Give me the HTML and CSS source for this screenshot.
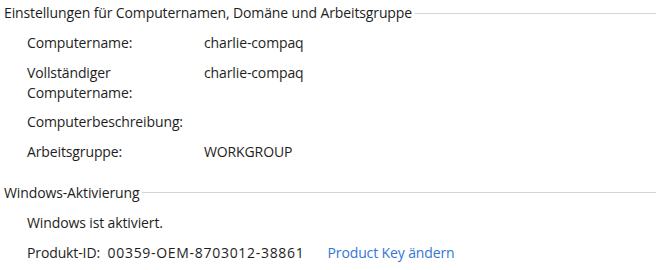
FILE: index.html
```html
<!DOCTYPE html>
<html lang="de">
  <head>
    <meta charset="UTF-8" />
    <title>System</title>
    <link rel="stylesheet" href="styles.css">
  </head>
  <body>
    <div class="section">
      <div class="heading"><span>Einstellungen für Computernamen, Domäne und Arbeitsgruppe</span></div>
      <div class="rows">
        <div class="label">Computername:</div>
        <div class="value">charlie-compaq</div>
        <div class="label">Vollständiger Computername:</div>
        <div class="value">charlie-compaq</div>
        <div class="label">Computerbeschreibung:</div>
        <div class="value"></div>
        <div class="label">Arbeitsgruppe:</div>
        <div class="value">WORKGROUP</div>
      </div>
    </div>
    <div class="section activation">
      <div class="heading"><span>Windows-Aktivierung</span></div>
      <div class="lines">
        <div>Windows ist aktiviert.</div>
        <div class="product">Produkt-ID: <span class="pid">00359-OEM-8703012-38861</span><a href="#">Product Key ändern</a></div>
      </div>
    </div>
  </body>
</html>
```

FILE: styles.css
```css
* {
  margin: 0;
  padding: 0;
  box-sizing: border-box;
}
body {
  background: #fff;
  color: #1e1e1e;
  font-family: "Open Sans", sans-serif;
  font-size: 14px;
  line-height: 20px;
  letter-spacing: -0.12px;
  padding: 3px 0 0 4px;
}
.heading {
  display: flex;
  align-items: center;
}
.heading::after {
  content: "";
  flex: 1;
  height: 1px;
  background: #d5d5d5;
  margin-left: 3px;
}
.rows {
  display: grid;
  grid-template-columns: 177px 1fr;
  row-gap: 9.5px;
  padding: 10px 0 0 23px;
}
.label {
  width: 130px;
}
.activation {
  margin-top: 21px;
}
.lines {
  padding: 10px 0 0 23px;
  display: flex;
  flex-direction: column;
  gap: 10px;
}
.pid {
  margin-left: 4px;
  letter-spacing: 0.7px;
}
.product a {
  color: #3376d6;
  text-decoration: none;
  letter-spacing: -0.12px;
  margin-left: 23px;
}
```
